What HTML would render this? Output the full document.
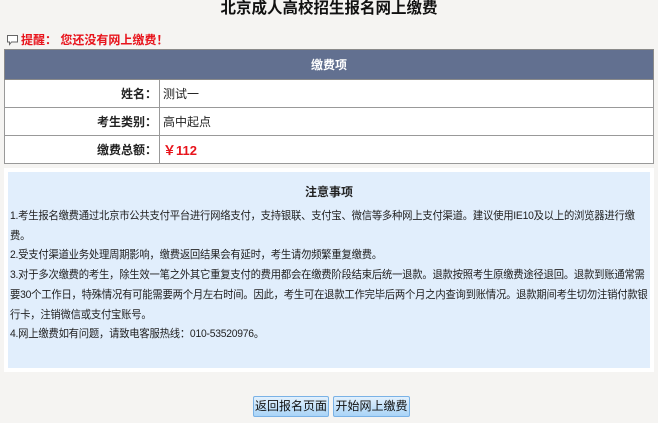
<!DOCTYPE html>
<html><head><meta charset="utf-8"><style>
body{margin:0;background:#f5f4f2;font-family:"Liberation Sans","Noto Sans CJK SC",sans-serif;font-size:12px;color:#222;width:658px;height:423px;overflow:hidden;position:relative}
.title{position:absolute;left:0;width:658px;top:-4px;text-align:center;font-size:15.5px;font-weight:bold;color:#111}
.warn{position:absolute;left:6px;top:31px;color:#e8141c;font-weight:bold;font-size:12px}
.warn svg{vertical-align:-2px;margin-right:2px}
table{position:absolute;left:4px;top:49px;width:650px;border-collapse:collapse;background:#fff}
th{background:#627090;color:#fff;height:29px;font-weight:bold;border:1px solid #8a8a8a;padding:0;font-size:12px}
td{height:27px;border:1px solid #999;padding:0}
td.l{width:152px;text-align:right;font-weight:bold;padding-right:2px}
td.v{padding-left:3px}
.note{position:absolute;left:4px;top:168px;width:642px;height:196px;border:4px solid #fff;background:#e1eefc;overflow:hidden}
.note h4{margin:0;text-align:center;font-size:12px;font-weight:bold;position:absolute;top:11px;width:100%}
.note p{margin:0;position:absolute;left:2px;top:35px;line-height:19.7px;color:#222;font-size:11px;letter-spacing:-0.25px;white-space:nowrap;transform:scaleX(0.94);transform-origin:0 0}
.btn{position:absolute;top:396px;height:19px;border:1px solid #7ab2e6;border-radius:2px;background:linear-gradient(#e3f1fd,#a9d4f7);font-size:12px;line-height:19px;text-align:center;color:#111}
</style></head><body>
<div class="title">北京成人高校招生报名网上缴费</div>
<div class="warn"><svg width="13" height="12" viewBox="0 0 13 12"><path d="M1.5 1.5h10v6.5h-6l-2 2.5v-2.5h-2z" fill="#fff" stroke="#666" stroke-width="1"/></svg>提醒： 您还没有网上缴费！</div>
<table>
<tr><th colspan="2">缴费项</th></tr>
<tr><td class="l">姓名：</td><td class="v">测试一</td></tr>
<tr><td class="l">考生类别：</td><td class="v">高中起点</td></tr>
<tr><td class="l">缴费总额：</td><td class="v" style="color:#e8141c;font-weight:bold;font-size:13px">￥112</td></tr>
</table>
<div class="note"><h4>注意事项</h4>
<p>1.考生报名缴费通过北京市公共支付平台进行网络支付，支持银联、支付宝、微信等多种网上支付渠道。建议使用IE10及以上的浏览器进行缴<br>费。<br>2.受支付渠道业务处理周期影响，缴费返回结果会有延时，考生请勿频繁重复缴费。<br>3.对于多次缴费的考生，除生效一笔之外其它重复支付的费用都会在缴费阶段结束后统一退款。退款按照考生原缴费途径退回。退款到账通常需<br>要30个工作日，特殊情况有可能需要两个月左右时间。因此，考生可在退款工作完毕后两个月之内查询到账情况。退款期间考生切勿注销付款银<br>行卡，注销微信或支付宝账号。<br>4.网上缴费如有问题，请致电客服热线：010-53520976。</p></div>
<div class="btn" style="left:253px;width:74px">返回报名页面</div>
<div class="btn" style="left:333px;width:75px">开始网上缴费</div>
</body></html>
